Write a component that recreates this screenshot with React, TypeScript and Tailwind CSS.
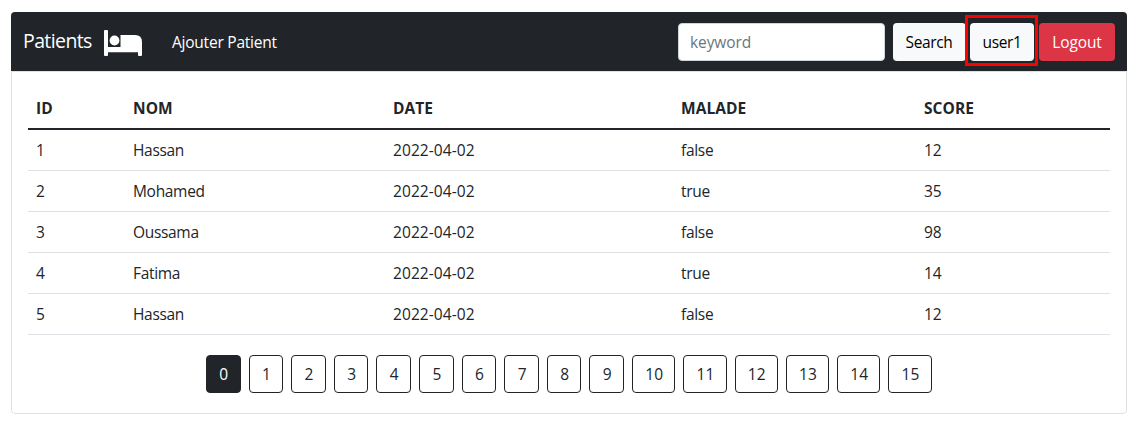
const patients = [
  [1, "Hassan", "2022-04-02", "false", 12],
  [2, "Mohamed", "2022-04-02", "true", 35],
  [3, "Oussama", "2022-04-02", "false", 98],
  [4, "Fatima", "2022-04-02", "true", 14],
  [5, "Hassan", "2022-04-02", "false", 12],
];

const columnTracking = [
  "tracking-normal",
  "tracking-[-0.32px]",
  "tracking-[0.08px]",
  "tracking-[-0.3px]",
  "tracking-normal",
];

const pages = Array.from({ length: 16 }, (_, i) => i);

function BedIcon() {
  return (
    <svg className="mt-[2px]" width="38" height="26" viewBox="0 0 38 26" fill="#fff" aria-hidden="true">
      <path d="M1 0H3Q4 0 4 1V17H16.5V5H31Q38 5 38 12V25Q38 26 37 26H35Q34 26 34 25V22.3H4V25Q4 26 3 26H1Q0 26 0 25V1Q0 0 1 0Z" />
      <circle cx="10.5" cy="10.5" r="4.9" />
    </svg>
  );
}

function Navbar() {
  return (
    <nav className="flex h-[59px] items-center bg-[#212529] px-3 text-white">
      <a className="flex w-[81px] shrink-0 items-center pb-[2px] text-[19.5px] leading-[30px] tracking-[-0.6px]">Patients</a>
      <BedIcon />
      <a className="ml-[30px] pt-px text-[15.5px] tracking-[-0.23px]">Ajouter Patient</a>
      <div className="ml-auto flex">
        <input
          placeholder="keyword"
          className="mr-2 h-[38px] w-[207px] rounded border border-[#ced4da] bg-white px-[11px] text-[15.5px] tracking-[-0.1px] text-[#212529] placeholder:text-[#6c757d]"
        />
        <button className="h-[38px] w-[73px] rounded bg-[#f8f9fa] pr-px text-[15.5px] tracking-[-0.35px] text-black">Search</button>
        <div className="relative ml-1 flex">
          <button className="h-[38px] w-[64px] rounded bg-[#f8f9fa] text-[15.5px] tracking-[-0.4px] text-black">user1</button>
          <span className="pointer-events-none absolute -top-2 -left-[5px] h-[51px] w-[73px] border-3 border-[#ff0000]" />
        </div>
        <button className="ml-[5px] h-[38px] w-[76px] rounded bg-[#dc3545] text-[15.5px] tracking-[-0.1px]">Logout</button>
      </div>
    </nav>
  );
}

export default function App() {
  return (
    <div className="h-[430px] bg-white pt-3 pr-[17px] pl-[11px] font-['Open_Sans','Noto_Sans',sans-serif] text-[15.5px] leading-6 text-[#212529]">
      <div className="h-[402px] overflow-hidden rounded">
        <Navbar />
        <main className="h-[343px] rounded-b border border-[#dfdfdf] px-4 pt-4">
          <table className="w-full table-fixed border-separate border-spacing-0 text-left">
            <colgroup>
              <col className="w-[97px]" />
              <col className="w-[260px]" />
              <col className="w-[288px]" />
              <col className="w-[243px]" />
              <col />
            </colgroup>
            <thead>
              <tr className="h-[42px]">
                {["ID", "NOM", "DATE", "MALADE", "SCORE"].map((h) => (
                  <th key={h} className="border-b-2 border-[#212529] px-2 py-0 text-[15.5px] font-bold tracking-[0.05px]">{h}</th>
                ))}
              </tr>
            </thead>
            <tbody>
              {patients.map((row) => (
                <tr key={row[0]} className="h-[41px]">
                  {row.map((cell, i) => (
                    <td key={i} className={`border-b border-[#dee2e6] px-2 py-0 ${columnTracking[i]}`}>{cell}</td>
                  ))}
                </tr>
              ))}
            </tbody>
          </table>
          <div className="mt-5 flex gap-2 pl-[178px]">
            {pages.map((p) => (
              <button
                key={p}
                className={`h-[38px] shrink-0 rounded border border-[#212529] pl-px ${p > 9 ? "w-[43.25px]" : "w-[34.62px]"} ${p === 0 ? "bg-[#212529] text-white" : "bg-white"}`}
              >
                {p}
              </button>
            ))}
          </div>
        </main>
      </div>
    </div>
  );
}
